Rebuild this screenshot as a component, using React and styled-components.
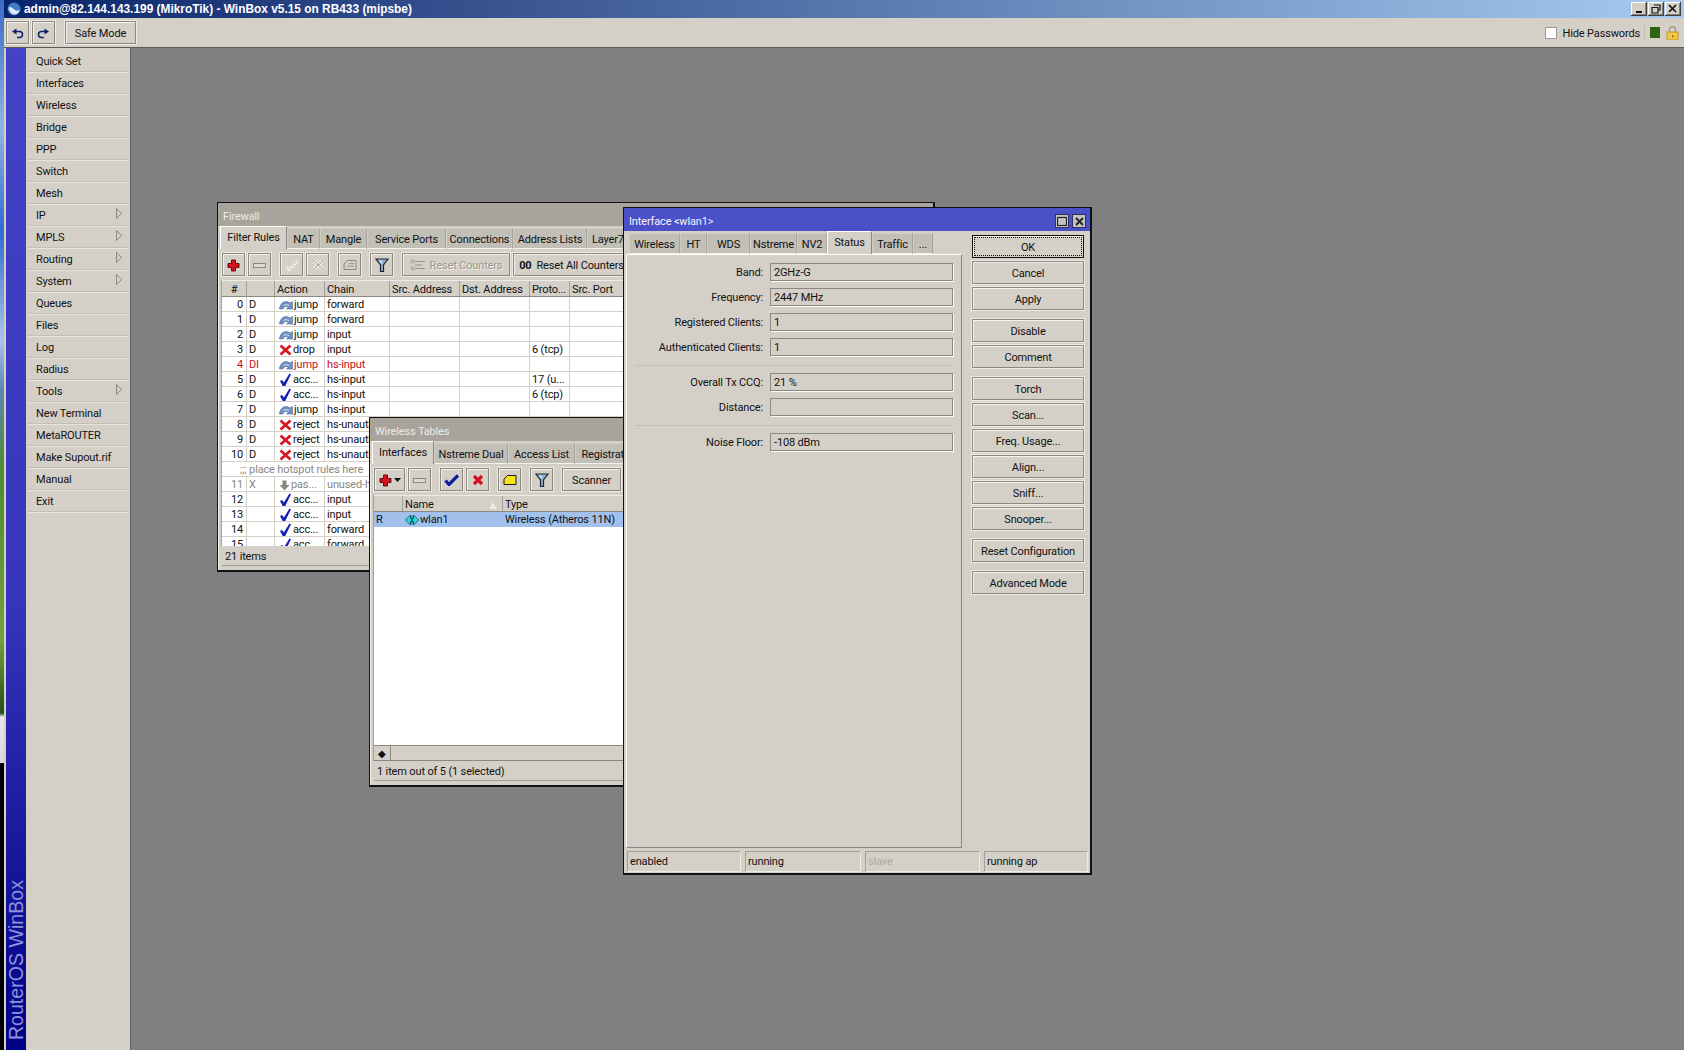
import React from "react";
import styled, { createGlobalStyle } from "styled-components";

const GlobalStyle = createGlobalStyle`
  html, body {
    margin: 0;
    height: 100%;
    overflow: hidden;
    background: #000;
  }
  #root { height: 100%; }
  * { box-sizing: border-box; }
`;

const uiFont = `Roboto, "Liberation Sans", Arial, sans-serif`;

// -----------------------------------------
// Icons
// -----------------------------------------

const Svg = ({ w = 14, h = 14, children }) => (
  <svg width={w} height={h} viewBox={`0 0 ${w} ${h}`} style={{ display: "block", flex: "none" }}>
    {children}
  </svg>
);

const AddIcon = () => (
  <Svg w={13} h={13}>
    <path d="M4.5 1h4v3.5H12v4H8.500V12h-4V8.500H1v-4h3.500z" fill="#d8101c" stroke="#5a1010" strokeWidth="1" />
  </Svg>
);

const RemoveIcon = () => (
  <Svg w={13} h={7}>
    <rect x="0.500" y="1.500" width="12" height="4" fill="#dcdad2" stroke="#8a8880" />
  </Svg>
);

const CheckIcon = ({ muted }) =>
  muted ? (
    <Svg w={14} h={12}>
      <path d="M1 7l3 3.500L13 2" fill="none" stroke="#fff" strokeWidth="2.400" />
      <path d="M1 7l3 3.500L13 2" fill="none" stroke="#9a968e" strokeWidth="1" strokeDasharray="1.500 1" />
    </Svg>
  ) : (
    <Svg w={15} h={12}>
      <path d="M1.500 6.500L5 10.500 14 1.500" fill="none" stroke="#0c1c9c" strokeWidth="3.200" />
    </Svg>
  );

const CrossIcon = ({ muted }) =>
  muted ? (
    <Svg w={12} h={12}>
      <path d="M2 2l8 8M10 2l-8 8" fill="none" stroke="#fff" strokeWidth="3.400" />
      <path d="M2 2l8 8M10 2l-8 8" fill="none" stroke="#9a968e" strokeWidth="2.400" strokeDasharray="1 1" />
    </Svg>
  ) : (
    <Svg w={12} h={12}>
      <path d="M2 2l8 8M10 2l-8 8" fill="none" stroke="#d4101c" strokeWidth="3.200" />
    </Svg>
  );

const NoteIcon = ({ muted }) => (
  <Svg w={14} h={12}>
    <path
      d="M4.500 1.500h8.500v9H1v-5.500z"
      fill={muted ? "#d4d0c8" : "#f6e61a"}
      stroke={muted ? "#8a8880" : "#1a1a10"}
    />
    {muted && <path d="M6 4.500h5M4 7h7" stroke="#9a968e" />}
  </Svg>
);

const FilterIcon = () => (
  <Svg w={14} h={15}>
    <path d="M1 1h12L8.500 7v6.500h-3V7z" fill="#8fb0d0" stroke="#20242c" strokeWidth="1.200" />
    <path d="M3.500 2.500h3L7 6z" fill="#dfeaf4" />
  </Svg>
);

const CounterIcon = () => (
  <Svg w={16} h={12}>
    <circle cx="2.500" cy="2.500" r="1.500" fill="none" stroke="#9a968e" />
    <circle cx="2.500" cy="9.500" r="1.500" fill="none" stroke="#9a968e" />
    <path d="M5 2.500h10M5 6h7M5 9.500h10" stroke="#9a968e" />
  </Svg>
);

const UndoIcon = () => (
  <Svg w={13} h={11}>
    <path d="M3 3.500h5.500a3 3 0 0 1 0 6H6" fill="none" stroke="#10206a" strokeWidth="1.500" />
    <path d="M1 3.500L5.500 0.500v6z" fill="#10206a" />
  </Svg>
);

const RedoIcon = () => (
  <Svg w={13} h={11}>
    <path d="M10 3.500H4.500a3 3 0 0 0 0 6H7" fill="none" stroke="#10206a" strokeWidth="1.500" />
    <path d="M12 3.500L7.500 0.500v6z" fill="#10206a" />
  </Svg>
);

const JumpIcon = () => (
  <Svg w={14} h={10}>
    <path d="M0.500 9C1 3 6 -0.500 11 3l2.500-1.500V9H7.500l2-2C7.500 5.800 5 6.300 3.800 9z" fill="#6f94c4" stroke="#44669c" strokeWidth="0.600" />
    <path d="M4.500 5.500C6 4.500 8 4.500 10 5.500" fill="none" stroke="#dfe8f4" strokeWidth="1" />
  </Svg>
);

const AcceptIcon = () => (
  <Svg w={13} h={14}>
    <path d="M1 8l2.200-1 1.600 2.500L10.500 0.500l1.500 0.800L6 13.500H4z" fill="#1422b0" />
  </Svg>
);

const DropIcon = () => (
  <Svg w={13} h={12}>
    <path d="M1.500 1.500l10 9M11.500 1.500l-10 9" fill="none" stroke="#d41a20" strokeWidth="2.800" />
  </Svg>
);

const PassIcon = () => (
  <Svg w={11} h={11}>
    <path d="M3.500 0.500h4V5H10.500L5.500 10.500 0.500 5h3z" fill="#8a8880" />
  </Svg>
);

const WlanIcon = () => (
  <Svg w={14} h={12}>
    <path d="M0.500 6L5.500 1v3.500H7v3H5.500V11z" fill="#1fe0e0" stroke="#0e5a5c" strokeWidth="0.900" />
    <path d="M13.500 6L8.500 1v3.500H7v3h1.500V11z" fill="#1fe0e0" stroke="#0e5a5c" strokeWidth="0.900" />
    <path d="M7 1.500v9" stroke="#123c40" strokeWidth="0.900" />
  </Svg>
);

const Lock = () => (
  <Svg w={13} h={14}>
    <path d="M3.500 6V3.800a3 3 0 0 1 6 0V6" fill="none" stroke="#a89c80" strokeWidth="1.400" />
    <rect x="1" y="6" width="11" height="8" fill="#f2c848" stroke="#c49628" />
    <rect x="6" y="9" width="1.500" height="2.500" fill="#9a7010" />
  </Svg>
);

const AppLogo = () => (
  <Svg w={14} h={14}>
    <circle cx="7" cy="7" r="6.500" fill="#3c7cc4" />
    <path d="M1.500 5.500C4 3.800 5.500 6.500 8 8c2 1.100 3.500 1 5-0.300C12 11 9.500 12.800 7 12.500 4 12 1.800 9 1.500 5.500z" fill="#dcecf8" />
  </Svg>
);

// -----------------------------------------
// Main frame
// -----------------------------------------

const Page = styled.div`
  display: flex;
  height: 100vh;
  font-family: ${uiFont};
  font-size: 11px;
  letter-spacing: -0.15px;
  color: #111;
`;

const Wallpaper = styled.div`
  width: 4px;
  flex: none;
  background: linear-gradient(
    180deg,
    #3b6dc4 0,
    #8fb4e6 130px,
    #2f6bd0 230px,
    #a8c4e8 340px,
    #5f88b0 390px,
    #4e8a30 470px,
    #6ea23a 640px,
    #274e18 713px,
    #e8e8e8 717px,
    #d8d8d8 763px,
    #000 763px
  );
`;

const AppFrame = styled.div`
  flex: 1;
  display: flex;
  flex-direction: column;
  min-width: 0;
`;

const TitleBar = styled.div`
  height: 18px;
  flex: none;
  display: flex;
  align-items: center;
  padding: 0 3px;
  gap: 3px;
  color: #fff;
  font-family: "Liberation Sans", Arial, sans-serif;
  font-size: 11.9px;
  letter-spacing: 0;
  font-weight: 700;
  background: linear-gradient(90deg, #0a246a 0, #a6caf0 100%);
`;

const TitleText = styled.span`
  flex: 1;
  white-space: nowrap;
`;

const CaptionButtons = styled.div`
  display: flex;
  gap: 1px;
`;

const CaptionButton = styled.div`
  width: 16px;
  height: 14px;
  background: #d4d0c8;
  border-right: 1px solid #404040;
  border-bottom: 1px solid #404040;
  box-shadow: inset 1px 1px 0 #fff, inset -1px -1px 0 #808080;
  display: flex;
  align-items: center;
  justify-content: center;
`;

const TopBar = styled.div`
  height: 30px;
  flex: none;
  display: flex;
  align-items: center;
  padding: 0 2px;
  background: #d4d0c8;
  border-bottom: 1px solid #5a5a58;
`;

const Raised = styled.button`
  height: 23px;
  width: ${(p) => p.$w || 23}px;
  flex: none;
  padding: 1px 0 0;
  margin: 0 0 0 ${(p) => p.$gap || 0}px;
  display: flex;
  align-items: center;
  justify-content: center;
  gap: ${(p) => p.$inner || 0}px;
  font: inherit;
  letter-spacing: inherit;
  color: inherit;
  background: #d4d0c8;
  border: 1px solid #8a8880;
  box-shadow: inset 1px 1px 0 #f4f2ec;
  outline: 1px solid #ecebe6;
  outline-offset: 0;
`;

const Muted = styled.span`
  color: #9a968e;
  text-shadow: 1px 1px 0 #f4f2ec;
`;

const HidePasswords = styled.label`
  margin-left: auto;
  display: flex;
  align-items: center;
  gap: 6px;
  padding-top: 1px;
`;

const CheckBox = styled.span`
  width: 12px;
  height: 12px;
  background: #fff;
  border: 1px solid #a09c94;
`;

const StatusIcons = styled.div`
  display: flex;
  align-items: center;
  gap: 6px;
  margin: 0 3px 0 4px;
  padding-left: 5px;
  border-left: 1px solid #c0bcb4;
`;

const GreenLight = styled.span`
  width: 10px;
  height: 11px;
  background: #2c6414;
`;

const Body = styled.div`
  flex: 1;
  display: flex;
  min-height: 0;
  background: #d4d0c8;
  padding-left: 2px;
`;

const Brand = styled.div`
  width: 20px;
  flex: none;
  display: flex;
  align-items: flex-end;
  justify-content: center;
  padding-bottom: 10px;
  background: linear-gradient(180deg, #4343c4 0, #3636bc 55%, #000084 100%);
`;

const BrandText = styled.span`
  writing-mode: vertical-rl;
  transform: rotate(180deg);
  font-family: "Liberation Sans", Arial, sans-serif;
  font-size: 19.6px;
  letter-spacing: 0;
  line-height: 20px;
  white-space: nowrap;
  color: #8f91dc;
`;

const Menu = styled.nav`
  width: 104px;
  flex: none;
  padding: 2px 2px 0;
`;

const MenuItem = styled.div`
  height: 22px;
  display: flex;
  align-items: center;
  justify-content: space-between;
  padding: 2px 6px 0 8px;
  border-bottom: 1px solid #c2bfb6;
  box-shadow: 0 1px 0 #e6e4de;
`;

const SubMark = styled.span`
  margin-bottom: 4px;
`;

const Workspace = styled.main`
  flex: 1;
  position: relative;
  overflow: hidden;
  background: #808080;
  border-left: 1px solid #5a5e58;
`;

// -----------------------------------------
// Windows
// -----------------------------------------

const Window = styled.section`
  position: absolute;
  left: ${(p) => p.$x}px;
  top: ${(p) => p.$y}px;
  width: ${(p) => p.$w}px;
  height: ${(p) => p.$h}px;
  display: flex;
  flex-direction: column;
  background: #d4d0c8;
  border: 1px solid #111;
  border-right-width: 2px;
  border-bottom-width: 2px;
`;

const WindowTitle = styled.header`
  height: 23px;
  flex: none;
  display: flex;
  align-items: center;
  justify-content: space-between;
  padding: 3px 4px 0 5px;
  background: ${(p) => (p.$active ? "#4b50c8" : "#a8a49c")};
  color: ${(p) => (p.$active ? "#f4f4ff" : "#ecebe4")};
`;

const WinControls = styled.div`
  display: flex;
  gap: 3px;
`;

const WinControl = styled.span`
  width: 14px;
  height: 14px;
  background: #c4c2c4;
  border: 1px solid #30305c;
  display: flex;
  align-items: center;
  justify-content: center;
`;

const TabStrip = styled.div`
  height: 23px;
  flex: none;
  display: flex;
  align-items: flex-end;
  padding-left: ${(p) => p.$pad}px;
  overflow: hidden;
  white-space: nowrap;
`;

const Tab = styled.div`
  width: ${(p) => p.$w}px;
  flex: none;
  text-align: center;
  height: ${(p) => (p.$on ? 23 : 21)}px;
  line-height: ${(p) => (p.$on ? 22 : 21)}px;
  background: ${(p) => (p.$on ? "#d4d0c8" : "#c2bfb7")};
  border-top: 1px solid ${(p) => (p.$on ? "#fff" : "#cfccc4")};
  border-left: 1px solid ${(p) => (p.$on ? "#fff" : "#cfccc4")};
  border-right: 1px solid ${(p) => (p.$on ? "#888" : "#a8a49c")};
  ${(p) => !p.$on && "border-bottom: 1px solid #f4f2ec;"}
  overflow: hidden;
`;

const Content = styled.div`
  flex: 1;
  display: flex;
  flex-direction: column;
  min-height: 0;
  padding: 0 4px 4px;
  box-shadow: inset 1px 0 0 #f4f2ec;
`;

const WinToolbar = styled.div`
  height: 23px;
  margin: 4px 0;
  flex: none;
  display: flex;
  white-space: nowrap;
`;

const Table = styled.div`
  flex: 1;
  min-height: 0;
  display: flex;
  flex-direction: column;
  overflow: hidden;
  background: #fff;
  box-shadow: -1px 0 0 #a4a098;
`;

const Rows = styled.div`
  flex: 1;
  min-height: 0;
  overflow: hidden;
`;

const Row = styled.div`
  display: grid;
  grid-template-columns: ${(p) => p.$cols};
  height: 15px;
  line-height: 14px;
  color: ${(p) => p.$color || "inherit"};
  background: ${(p) => p.$bg || "transparent"};
  border-bottom: 1px solid ${(p) => (p.$plain ? "transparent" : "#d4d0c8")};
`;

const HeadRow = styled(Row)`
  height: 17px;
  padding-top: 1px;
  background: #d4d0c8;
  border-bottom: 1px solid #8a8880;
  border-top: 1px solid #eeece6;
`;

const Cell = styled.div`
  display: flex;
  align-items: center;
  justify-content: ${(p) => (p.$right ? "flex-end" : "flex-start")};
  gap: ${(p) => (p.$tight ? 1 : 3)}px;
  padding: 2px ${(p) => (p.$right ? 3 : 2)}px 0 ${(p) => p.$pad || 2}px;
  border-right: 1px solid ${(p) => (p.$plain ? "transparent" : "#d4d0c8")};
  overflow: hidden;
  white-space: nowrap;
`;

const HeadCell = styled(Cell)`
  justify-content: ${(p) => (p.$center ? "center" : "space-between")};
  border-right: 1px solid #a4a098;
  margin-top: -1px;
  padding-top: 3px;
`;

const SortMark = styled.span`
  width: 0;
  height: 0;
  border-left: 4px solid transparent;
  border-right: 4px solid transparent;
  border-bottom: 7px solid #ecebe4;
  margin-right: 3px;
`;

const CommentRow = styled.div`
  height: 15px;
  line-height: 16px;
  padding-left: 18px;
  color: #8a8880;
  border-bottom: 1px solid #d4d0c8;
  white-space: nowrap;
`;

const ScrollBar = styled.div`
  height: 16px;
  flex: none;
  display: flex;
  background: #d4d0c8;
  border-top: 1px solid #8a8880;
  border-bottom: 1px solid #8a8880;
`;

const ScrollArrow = styled.div`
  width: 17px;
  display: flex;
  align-items: center;
  justify-content: center;
  border-right: 1px solid #8a8880;
  color: #111;
  font-size: 10px;
`;

const StatusLine = styled.div`
  height: 20px;
  flex: none;
  padding: 1px 3px 0;
  line-height: 19px;
  border-bottom: 1px solid #a4a098;
`;

// Interface window parts

const SplitPane = styled.div`
  flex: 1;
  min-height: 0;
  display: flex;
  padding: 0 0 0 2px;
`;

const TabColumn = styled.div`
  width: 336px;
  flex: none;
  display: flex;
  flex-direction: column;
`;

const TabPanel = styled.div`
  flex: 1;
  display: flex;
  flex-direction: column;
  gap: 7px;
  padding-top: 8px;
  border-top: 1px solid #fff;
  border-left: 1px solid #fff;
  border-right: 1px solid #888;
  border-bottom: 1px solid #888;
`;

const FieldRow = styled.div`
  display: grid;
  grid-template-columns: 136px 183px;
  column-gap: 7px;
  align-items: center;
  height: 18px;
`;

const FieldLabel = styled.span`
  text-align: right;
`;

const FieldValue = styled.div`
  height: 18px;
  padding: 0 3px;
  line-height: 18px;
  background: #d4d0c8;
  border: 1px solid #8a8880;
  box-shadow: 1px 1px 0 #fbfaf6;
`;

const Divider = styled.div`
  height: 1px;
  margin: 2px 8px 0;
  background: #c2bfb6;
`;

const ButtonColumn = styled.div`
  display: flex;
  flex-direction: column;
  gap: 9px;
  margin-left: 10px;
  padding-top: 4px;
`;

const ButtonGroup = styled.div`
  display: flex;
  flex-direction: column;
  gap: 3px;
`;

const ActionButton = styled(Raised).attrs({ $w: 112 })`
  margin: 0;
  outline: ${(p) => (p.$default ? "1px dotted #111" : "1px solid #ecebe6")};
  outline-offset: ${(p) => (p.$default ? "-3px" : "0")};
  ${(p) => p.$default && "border: 1px solid #111;"}
`;

const StatusCells = styled.div`
  height: 19px;
  flex: none;
  display: grid;
  grid-template-columns: 114px 116px 115px 104px;
  column-gap: 4px;
  margin: 3px 0 3px 3px;
`;

const StatusCell = styled.div`
  padding: 0 2px;
  line-height: 19px;
  border-top: 1px solid #a4a098;
  border-left: 1px solid #a4a098;
  border-bottom: 1px solid #ecebe6;
  border-right: 1px solid #ecebe6;
  color: ${(p) => (p.$dim ? "#aeaaa2" : "inherit")};
`;

// -----------------------------------------
// Data
// -----------------------------------------

const menu = [
  ["Quick Set"], ["Interfaces"], ["Wireless"], ["Bridge"], ["PPP"], ["Switch"], ["Mesh"],
  ["IP", 1], ["MPLS", 1], ["Routing", 1], ["System", 1], ["Queues"], ["Files"], ["Log"],
  ["Radius"], ["Tools", 1], ["New Terminal"], ["MetaROUTER"], ["Make Supout.rif"], ["Manual"], ["Exit"],
];

const actions = {
  jump: [<JumpIcon key="i" />, "jump"],
  drop: [<DropIcon key="i" />, "drop"],
  acc: [<AcceptIcon key="i" />, "acc..."],
  reject: [<DropIcon key="i" />, "reject"],
  pas: [<PassIcon key="i" />, "pas..."],
};

const rules = [
  ["0", "D", "jump", "forward"],
  ["1", "D", "jump", "forward"],
  ["2", "D", "jump", "input"],
  ["3", "D", "drop", "input", "6 (tcp)"],
  ["4", "DI", "jump", "hs-input", "", "#c8101c"],
  ["5", "D", "acc", "hs-input", "17 (u..."],
  ["6", "D", "acc", "hs-input", "6 (tcp)"],
  ["7", "D", "jump", "hs-input"],
  ["8", "D", "reject", "hs-unauth"],
  ["9", "D", "reject", "hs-unauth"],
  ["10", "D", "reject", "hs-unauth"],
  "comment",
  ["11", "X", "pas", "unused-hs", "", "#8a8880"],
  ["12", "", "acc", "input"],
  ["13", "", "acc", "input"],
  ["14", "", "acc", "forward"],
  ["15", "", "acc", "forward"],
];

const fwCols = "25px 28px 50px 65px 70px 70px 40px 70px 1fr";
const fwHeads = ["#", "", "Action", "Chain", "Src. Address", "Dst. Address", "Proto...", "Src. Port", ""];

const fwTabs = [
  ["Filter Rules", 67, true], ["NAT", 33], ["Mangle", 47], ["Service Ports", 79],
  ["Connections", 67], ["Address Lists", 74], ["Layer7 Protocols", 90],
];
const wlTabs = [
  ["Interfaces", 62, true], ["Nstreme Dual", 74], ["Access List", 67], ["Registration", 70],
];
const ifTabs = [
  ["Wireless", 51], ["HT", 27], ["WDS", 43], ["Nstreme", 47], ["NV2", 30],
  ["Status", 45, true], ["Traffic", 41], ["...", 20],
];

const fields = [
  ["Band:", "2GHz-G"], ["Frequency:", "2447 MHz"], ["Registered Clients:", "1"], ["Authenticated Clients:", "1"],
  null,
  ["Overall Tx CCQ:", "21 %"], ["Distance:", ""],
  null,
  ["Noise Floor:", "-108 dBm"],
];

const buttonGroups = [
  ["OK", "Cancel", "Apply"],
  ["Disable", "Comment"],
  ["Torch", "Scan...", "Freq. Usage...", "Align...", "Sniff...", "Snooper..."],
  ["Reset Configuration"],
  ["Advanced Mode"],
];

function Tabs({ items, pad }) {
  return (
    <TabStrip $pad={pad}>
      {items.map(([label, w, on]) => (
        <Tab key={label} $w={w} $on={on}>
          {label}
        </Tab>
      ))}
    </TabStrip>
  );
}

function FirewallWindow() {
  return (
    <Window $x={86} $y={154} $w={718} $h={370}>
      <WindowTitle>Firewall</WindowTitle>
      <Tabs items={fwTabs} pad={2} />
      <Content>
        <WinToolbar>
          <Raised><AddIcon /></Raised>
          <Raised $gap={3}><RemoveIcon /></Raised>
          <Raised $gap={9}><CheckIcon muted /></Raised>
          <Raised $gap={3}><CrossIcon muted /></Raised>
          <Raised $gap={9}><NoteIcon muted /></Raised>
          <Raised $gap={9}><FilterIcon /></Raised>
          <Raised $gap={9} $w={108} $inner={4}><CounterIcon /><Muted>Reset Counters</Muted></Raised>
          <Raised $gap={3} $w={117} $inner={5}><b>00</b>Reset All Counters</Raised>
        </WinToolbar>
        <Table>
          <HeadRow $cols={fwCols}>
            {fwHeads.map((h, i) => (
              <HeadCell key={i} $center={i === 0}>{h}</HeadCell>
            ))}
          </HeadRow>
          <Rows>
            {rules.map((r, i) => {
              if (r === "comment") return <CommentRow key={i}>;;; place hotspot rules here</CommentRow>;
              const [num, flag, action, chain, proto, color] = r;
              return (
                <Row key={i} $cols={fwCols} $color={color}>
                  <Cell $right>{num}</Cell>
                  <Cell>{flag}</Cell>
                  <Cell $pad={4} $tight>{actions[action]}</Cell>
                  <Cell>{chain}</Cell>
                  <Cell />
                  <Cell />
                  <Cell>{proto}</Cell>
                  <Cell />
                  <Cell />
                </Row>
              );
            })}
          </Rows>
        </Table>
        <StatusLine>21 items</StatusLine>
      </Content>
    </Window>
  );
}

function WirelessWindow() {
  const cols = "29px 100px 1fr";
  return (
    <Window $x={238} $y={369} $w={420} $h={370}>
      <WindowTitle>Wireless Tables</WindowTitle>
      <Tabs items={wlTabs} pad={2} />
      <Content>
        <WinToolbar>
          <Raised $w={31} $inner={2}>
            <AddIcon />
            <Svg w={7} h={4}><path d="M0 0h7L3.500 4z" fill="#111" /></Svg>
          </Raised>
          <Raised $gap={3}><RemoveIcon /></Raised>
          <Raised $gap={9}><CheckIcon /></Raised>
          <Raised $gap={3}><CrossIcon /></Raised>
          <Raised $gap={9}><NoteIcon /></Raised>
          <Raised $gap={9}><FilterIcon /></Raised>
          <Raised $gap={9} $w={59}>Scanner</Raised>
        </WinToolbar>
        <Table>
          <HeadRow $cols={cols}>
            <HeadCell />
            <HeadCell>Name<SortMark /></HeadCell>
            <HeadCell>Type</HeadCell>
          </HeadRow>
          <Rows>
            <Row $cols={cols} $bg="#a2c0ec" $plain>
              <Cell $plain>R</Cell>
              <Cell $plain $tight $pad={2}><WlanIcon />wlan1</Cell>
              <Cell $plain>Wireless (Atheros 11N)</Cell>
            </Row>
          </Rows>
          <ScrollBar>
            <ScrollArrow>◆</ScrollArrow>
          </ScrollBar>
        </Table>
        <StatusLine>1 item out of 5 (1 selected)</StatusLine>
      </Content>
    </Window>
  );
}

function InterfaceWindow() {
  return (
    <Window $x={492} $y={159} $w={469} $h={668}>
      <WindowTitle $active>
        Interface &lt;wlan1&gt;
        <WinControls>
          <WinControl>
            <Svg w={10} h={10}><rect x="0.500" y="1.500" width="9" height="8" fill="none" stroke="#222" strokeWidth="1.200" /></Svg>
          </WinControl>
          <WinControl>
            <Svg w={9} h={9}><path d="M1 1l7 7M8 1L1 8" stroke="#222" strokeWidth="1.800" /></Svg>
          </WinControl>
        </WinControls>
      </WindowTitle>
      <SplitPane>
        <TabColumn>
          <Tabs items={ifTabs} pad={3} />
          <TabPanel>
            {fields.map((f, i) =>
              f ? (
                <FieldRow key={i}>
                  <FieldLabel>{f[0]}</FieldLabel>
                  <FieldValue>{f[1]}</FieldValue>
                </FieldRow>
              ) : (
                <Divider key={i} />
              )
            )}
          </TabPanel>
        </TabColumn>
        <ButtonColumn>
          {buttonGroups.map((group) => (
            <ButtonGroup key={group[0]}>
              {group.map((b) => (
                <ActionButton key={b} $default={b === "OK"}>{b}</ActionButton>
              ))}
            </ButtonGroup>
          ))}
        </ButtonColumn>
      </SplitPane>
      <StatusCells>
        <StatusCell>enabled</StatusCell>
        <StatusCell>running</StatusCell>
        <StatusCell $dim>slave</StatusCell>
        <StatusCell>running ap</StatusCell>
      </StatusCells>
    </Window>
  );
}

export default function App() {
  return (
    <Page>
      <GlobalStyle />
      <Wallpaper />
      <AppFrame>
        <TitleBar>
          <AppLogo />
          <TitleText>admin@82.144.143.199 (MikroTik) - WinBox v5.15 on RB433 (mipsbe)</TitleText>
          <CaptionButtons>
            <CaptionButton>
              <Svg w={8} h={8}><rect x="1" y="6" width="6" height="2" fill="#111" /></Svg>
            </CaptionButton>
            <CaptionButton>
              <Svg w={10} h={10}>
                <path d="M3 1h6v5H7M1 3.500h6v5.500H1z" fill="none" stroke="#111" strokeWidth="1.200" />
              </Svg>
            </CaptionButton>
            <CaptionButton>
              <Svg w={9} h={9}><path d="M1 1l7 7M8 1L1 8" stroke="#111" strokeWidth="1.700" /></Svg>
            </CaptionButton>
          </CaptionButtons>
        </TitleBar>
        <TopBar>
          <Raised><UndoIcon /></Raised>
          <Raised $gap={3}><RedoIcon /></Raised>
          <Raised $gap={10} $w={71}>Safe Mode</Raised>
          <HidePasswords><CheckBox />Hide Passwords</HidePasswords>
          <StatusIcons>
            <GreenLight />
            <Lock />
          </StatusIcons>
        </TopBar>
        <Body>
          <Brand>
            <BrandText>RouterOS WinBox</BrandText>
          </Brand>
          <Menu>
            {menu.map(([label, sub]) => (
              <MenuItem key={label}>
                {label}
                {sub && (
                  <SubMark>
                    <Svg w={6} h={11}>
                      <path d="M0.500 0.500L5.500 5.500 0.500 10.500z" fill="#d4d0c8" stroke="#8a8880" />
                    </Svg>
                  </SubMark>
                )}
              </MenuItem>
            ))}
          </Menu>
          <Workspace>
            <FirewallWindow />
            <WirelessWindow />
            <InterfaceWindow />
          </Workspace>
        </Body>
      </AppFrame>
    </Page>
  );
}
